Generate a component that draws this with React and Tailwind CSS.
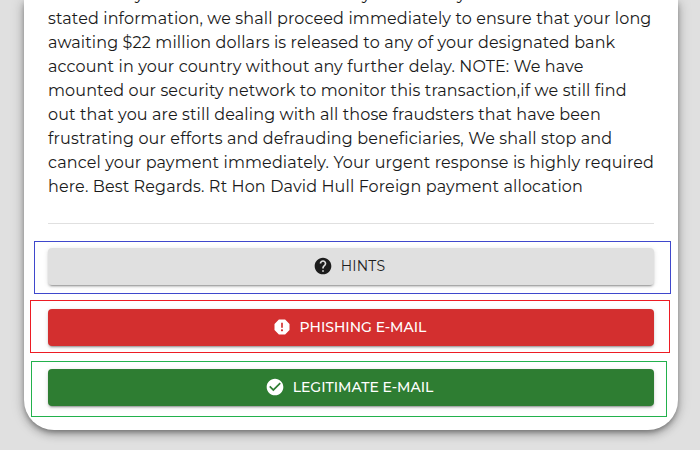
import { MdHelp, MdReport, MdCheckCircle } from "react-icons/md";

const lines = [
  "stated information, we shall proceed immediately to ensure that your long",
  "awaiting $22 million dollars is released to any of your designated bank",
  "account in your country without any further delay. NOTE: We have",
  "mounted our security network to monitor this transaction,if we still find",
  "out that you are still dealing with all those fraudsters that have been",
  "frustrating our efforts and defrauding beneficiaries, We shall stop and",
  "cancel your payment immediately. Your urgent response is highly required",
  "here. Best Regards. Rt Hon David Hull Foreign payment allocation",
];

const buttonBase =
  "flex h-[36.5px] w-[606px] items-center justify-center gap-2 rounded pr-1 text-sm shadow-[0px_3px_1px_-2px_rgba(0,0,0,0.2),0px_2px_2px_0px_rgba(0,0,0,0.14),0px_1px_5px_0px_rgba(0,0,0,0.12)]";

export default function App() {
  return (
    <div className="h-[450px] w-[700px] overflow-hidden bg-[#e0e0e0] font-['Montserrat','Inter',sans-serif]">
      <main className="ml-6 h-[430px] w-[654px] rounded-b-[30px] bg-white shadow-[0px_3px_5px_-1px_rgba(0,0,0,0.3),0px_5px_8px_0px_rgba(0,0,0,0.16),0px_1px_14px_0px_rgba(0,0,0,0.22)]">
        <div className="flex h-[7px] items-end overflow-hidden text-base leading-6 text-[#1a1a1a]">
          <span className="ml-[111px] w-[227px]">y</span>
          <span className="w-[95px]">y</span>
          <span>y</span>
        </div>
        <div className="ml-6 text-base leading-6 tracking-[0.13px] text-[#1a1a1a]">
          {lines.map((text) => (
            <p key={text} className="whitespace-nowrap">
              {text}
            </p>
          ))}
        </div>
        <hr className="mx-6 mt-[24px] border-t border-[#e0e0e0]" />
        <section className="mt-[17px] ml-[10px] h-[53px] w-[637px] border border-[#3f48cc] pt-[6px] pl-[13px]">
          <button className={`${buttonBase} bg-[#e0e0e0] font-normal tracking-[0.2px] text-[#1d1d1d]`}>
            <MdHelp size={20} />
            <span>HINTS</span>
          </button>
        </section>
        <section className="mt-[6px] ml-[6px] h-[53px] w-[640px] border border-[#ed1c24] pt-[8px] pl-[17px]">
          <button className={`${buttonBase} bg-[#d32f2f] font-medium text-white`}>
            <MdReport size={20} />
            <span>PHISHING E-MAIL</span>
          </button>
        </section>
        <section className="mt-[8px] ml-[7px] h-[56px] w-[636px] border border-[#22b14c] pt-[7px] pl-[16px]">
          <button className={`${buttonBase} bg-[#2e7d32] font-medium text-white`}>
            <MdCheckCircle size={20} />
            <span>LEGITIMATE E-MAIL</span>
          </button>
        </section>
      </main>
    </div>
  );
}
